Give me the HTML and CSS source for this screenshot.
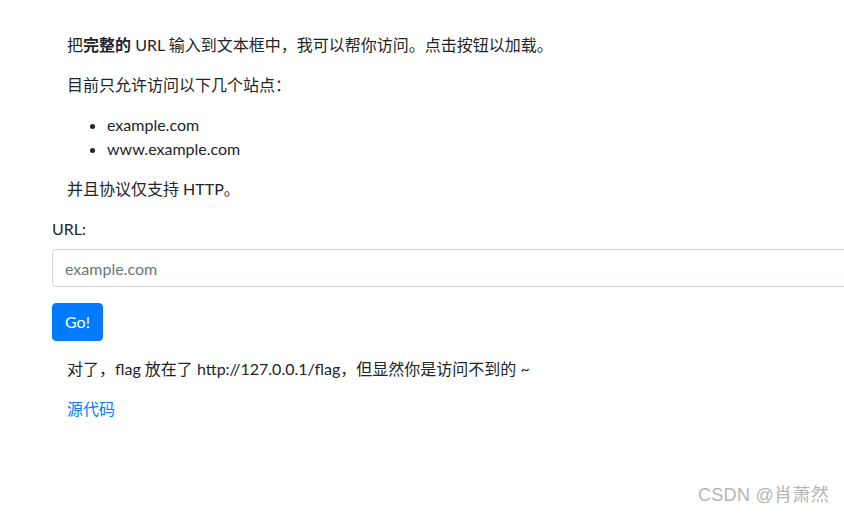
FILE: index.html
```html
<!DOCTYPE html>
<html lang="zh-CN">
<head>
<meta charset="utf-8">
<title>SSRF</title>
<link rel="stylesheet" href="styles.css">
</head>
<body>
<div class="page">
  <div class="text">
    <p>把<b>完整的</b> URL 输入到文本框中，我可以帮你访问。点击按钮以加载。</p>
    <p>目前只允许访问以下几个站点：</p>
    <ul>
      <li>example.com</li>
      <li>www.example.com</li>
    </ul>
    <p>并且协议仅支持 HTTP。</p>
  </div>
  <form class="form">
    <div class="form-group">
      <label class="label" for="url">URL:</label>
      <input class="input" id="url" type="text" placeholder="example.com">
    </div>
    <button class="btn" type="button">Go!</button>
  </form>
  <div class="text">
    <p>对了，flag 放在了 http://127.0.0.1/flag，但显然你是访问不到的 ~</p>
    <p><a class="link" href="#">源代码</a></p>
  </div>
</div>
<div class="watermark">CSDN @肖萧然</div>
</body>
</html>
```
FILE: styles.css
```css
html, body {
  margin: 0;
  padding: 0;
  overflow: hidden;
}
body {
  font-family: "Lato", "Noto Sans CJK SC", sans-serif;
  font-size: 16px;
  line-height: 1.5;
  color: #212529;
  background: #fff;
  width: 844px;
  height: 517px;
  position: relative;
}
.page {
  padding: 33px 0 0 52px;
  overflow: hidden;
}
.text {
  padding-left: 15px;
}
p {
  margin: 0 0 16px;
}
b {
  font-weight: 700;
}
ul {
  margin: 0 0 16px;
  padding-left: 40px;
}
.form-group {
  margin-bottom: 16px;
}
.label {
  display: block;
  margin-bottom: 8px;
}
.input {
  display: block;
  box-sizing: border-box;
  width: calc(100% + 20px);
  height: 38px;
  padding: 6px 12px;
  font-family: inherit;
  font-size: 16px;
  line-height: 1.5;
  color: #495057;
  border: 1px solid #ced4da;
  border-radius: 4px;
  background: #fff;
}
.input::placeholder {
  color: #6c757d;
  opacity: 1;
}
.btn {
  display: block;
  height: 38px;
  padding: 6px 12px;
  font-family: inherit;
  font-size: 16px;
  line-height: 1.5;
  color: #fff;
  background: #007bff;
  border: 1px solid #007bff;
  border-radius: 4px;
  margin-bottom: 16px;
}
.link {
  color: #007bff;
  text-decoration: none;
}
.watermark {
  position: absolute;
  right: 15px;
  bottom: 8px;
  font-family: "Liberation Sans", "Noto Sans CJK SC", sans-serif;
  font-size: 18px;
  color: #b5b5b5;
  letter-spacing: 0.3px;
}
```
